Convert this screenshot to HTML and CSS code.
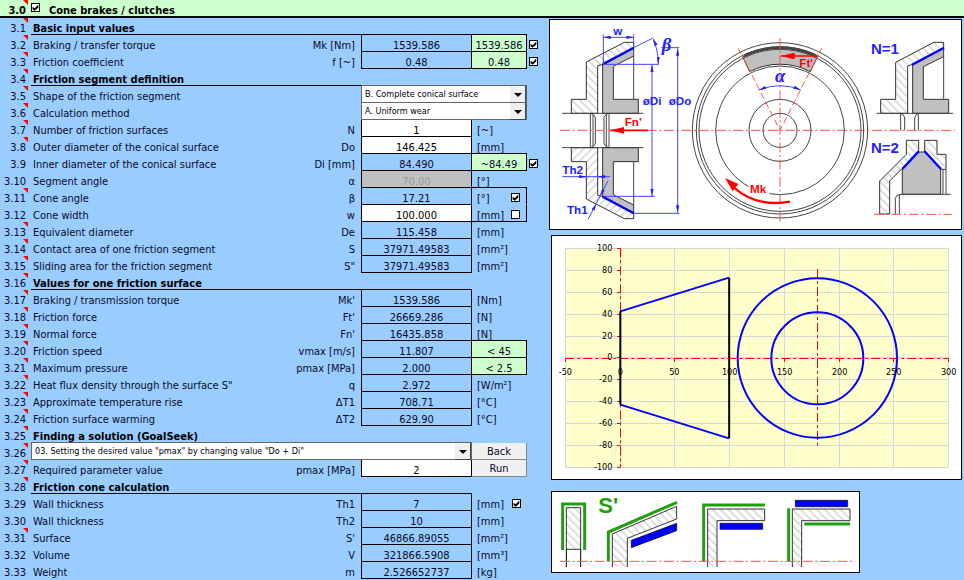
FILE: index.html
```html
<!DOCTYPE html>
<html lang="en">
<head>
<meta charset="utf-8">
<title>Cone brakes / clutches</title>
<link rel="stylesheet" href="styles.css">
</head>
<body>
<header class="title-bar">
  <span class="title-no note">3.0</span>
  <input type="checkbox" id="section-on" checked>
  <label for="section-on" class="title">Cone brakes / clutches</label>
</header>
<main class="sheet">
<form class="inputs">
<table class="calc">
<colgroup><col class="c-no"><col><col class="c-sym"><col class="c-val"><col class="c-ext"><col class="c-chk"></colgroup>
<tbody>
<tr class="section"><td class="no note">3.1</td><th colspan="3">Basic input values</th><td class="line"></td><td></td></tr>
<tr><td class="no note">3.2</td><td><label for="k1">Braking / transfer torque</label></td><td class="sym">Mk [Nm]</td><td class="val">1539.586</td><td class="hint">1539.586</td><td class="chk"><input type="checkbox" id="k1" checked></td></tr>
<tr><td class="no note">3.3</td><td><label for="k2">Friction coefficient</label></td><td class="sym">f [~]</td><td class="val">0.48</td><td class="hint">0.48</td><td class="chk"><input type="checkbox" id="k2" checked></td></tr>
<tr class="section"><td class="no note">3.4</td><th colspan="3">Friction segment definition</th><td></td><td></td></tr>
<tr><td class="no note">3.5</td><td><label for="shape">Shape of the friction segment</label></td><td></td><td class="pick" colspan="2"><div class="drop"><select id="shape"><option>B. Complete conical surface</option></select></div></td><td></td></tr>
<tr><td class="no note">3.6</td><td><label for="method">Calculation method</label></td><td></td><td class="pick" colspan="2"><div class="drop"><select id="method"><option>A. Uniform wear</option></select></div></td><td></td></tr>
<tr><td class="no note">3.7</td><td><label for="n">Number of friction surfaces</label></td><td class="sym">N</td><td class="val edit"><input type="text" id="n" value="1"></td><td class="unit">[~]</td><td></td></tr>
<tr><td class="no note">3.8</td><td><label for="do">Outer diameter of the conical surface</label></td><td class="sym">Do</td><td class="val edit"><input type="text" id="do" value="146.425"></td><td class="unit line">[mm]</td><td></td></tr>
<tr><td class="no">3.9</td><td><label for="k3">Inner diameter of the conical surface</label></td><td class="sym">Di [mm]</td><td class="val">84.490</td><td class="hint">~84.49</td><td class="chk"><input type="checkbox" id="k3" checked></td></tr>
<tr><td class="no">3.10</td><td>Segment angle</td><td class="sym">α</td><td class="val off">70.00</td><td class="unit line">[°]</td><td></td></tr>
<tr><td class="no note">3.11</td><td><label for="k4">Cone angle</label></td><td class="sym">β</td><td class="val">17.21</td><td class="unit side"><div class="pair">[°]<input type="checkbox" id="k4" checked></div></td><td></td></tr>
<tr><td class="no">3.12</td><td><label for="w">Cone width</label></td><td class="sym">w</td><td class="val edit"><input type="text" id="w" value="100.000"></td><td class="unit side line"><div class="pair">[mm]<input type="checkbox" aria-label="Cone width given"></div></td><td></td></tr>
<tr><td class="no note">3.13</td><td>Equivalent diameter</td><td class="sym">De</td><td class="val">115.458</td><td class="unit">[mm]</td><td></td></tr>
<tr><td class="no note">3.14</td><td>Contact area of one friction segment</td><td class="sym">S</td><td class="val">37971.49583</td><td class="unit">[mm²]</td><td></td></tr>
<tr><td class="no note">3.15</td><td>Sliding area for the friction segment</td><td class="sym">S"</td><td class="val">37971.49583</td><td class="unit">[mm²]</td><td></td></tr>
<tr class="section"><td class="no note">3.16</td><th colspan="3">Values for one friction surface</th><td></td><td></td></tr>
<tr><td class="no note">3.17</td><td>Braking / transmission torque</td><td class="sym">Mk'</td><td class="val">1539.586</td><td class="unit">[Nm]</td><td></td></tr>
<tr><td class="no note">3.18</td><td>Friction force</td><td class="sym">Ft'</td><td class="val">26669.286</td><td class="unit">[N]</td><td></td></tr>
<tr><td class="no note">3.19</td><td>Normal force</td><td class="sym">Fn'</td><td class="val">16435.858</td><td class="unit line">[N]</td><td></td></tr>
<tr><td class="no note">3.20</td><td>Friction speed</td><td class="sym">vmax [m/s]</td><td class="val">11.807</td><td class="hint">&lt; 45</td><td></td></tr>
<tr><td class="no note">3.21</td><td>Maximum pressure</td><td class="sym">pmax [MPa]</td><td class="val">2.000</td><td class="hint">&lt; 2.5</td><td></td></tr>
<tr><td class="no note">3.22</td><td>Heat flux density through the surface S"</td><td class="sym">q</td><td class="val">2.972</td><td class="unit">[W/m²]</td><td></td></tr>
<tr><td class="no note">3.23</td><td>Approximate temperature rise</td><td class="sym">ΔT1</td><td class="val">708.71</td><td class="unit">[°C]</td><td></td></tr>
<tr><td class="no note">3.24</td><td>Friction surface warming</td><td class="sym">ΔT2</td><td class="val">629.90</td><td class="unit">[°C]</td><td></td></tr>
<tr class="section"><td class="no note">3.25</td><th colspan="3">Finding a solution (GoalSeek)</th><td></td><td></td></tr>
<tr><td class="no note">3.26</td><td class="pick" colspan="3"><div class="drop"><select aria-label="Goal"><option>03. Setting the desired value "pmax" by changing value "Do + Di"</option></select></div></td><td class="pick"><button type="button">Back</button></td><td></td></tr>
<tr><td class="no note">3.27</td><td><label for="goal">Required parameter value</label></td><td class="sym">pmax [MPa]</td><td class="val edit"><input type="text" id="goal" value="2"></td><td class="pick"><button type="button">Run</button></td><td></td></tr>
<tr class="section"><td class="no note">3.28</td><th colspan="3">Friction cone calculation</th><td></td><td></td></tr>
<tr><td class="no">3.29</td><td><label for="k5">Wall thickness</label></td><td class="sym">Th1</td><td class="val">7</td><td class="unit"><div class="pair">[mm]<input type="checkbox" id="k5" checked></div></td><td></td></tr>
<tr><td class="no">3.30</td><td>Wall thickness</td><td class="sym">Th2</td><td class="val">10</td><td class="unit">[mm]</td><td></td></tr>
<tr><td class="no note">3.31</td><td>Surface</td><td class="sym">S'</td><td class="val">46866.89055</td><td class="unit">[mm²]</td><td></td></tr>
<tr><td class="no">3.32</td><td>Volume</td><td class="sym">V</td><td class="val">321866.5908</td><td class="unit">[mm³]</td><td></td></tr>
<tr><td class="no">3.33</td><td>Weight</td><td class="sym">m</td><td class="val">2.526652737</td><td class="unit">[kg]</td><td></td></tr>
</tbody>
</table>
</form>

<div class="figures">
<svg class="figure" viewBox="6 12 1233 627" role="img" aria-label="Cone clutch scheme">
  <defs>
    <pattern id="hatch" width="17" height="17" patternUnits="userSpaceOnUse" patternTransform="rotate(-45)"><rect width="17" height="17" fill="#fff"/><path d="M8 0V17" stroke="#b0b0b0" stroke-width="2.5"/></pattern>
    <marker id="blue" viewBox="0 0 22 10" refX="22" refY="5" markerWidth="22" markerHeight="10" markerUnits="userSpaceOnUse" orient="auto-start-reverse"><path d="M0 0L22 5L0 10Z" fill="#22f"/></marker>
    <marker id="red" viewBox="0 0 42 20" refX="42" refY="10" markerWidth="42" markerHeight="20" markerUnits="userSpaceOnUse" orient="auto"><path d="M0 0L42 10L0 20Z" fill="#f00"/></marker>
    <g id="half">
      <path class="hatch" d="M115 138L229 79H257V96L166 145L149 149V292H70V250H115Z"/>
      <path class="solid" d="M164 147L257 97V120L196 151V250H271V292H164Z"/>
      <path class="thick" d="M164 145L257 95"/>
      <path class="edge" d="M42 292H286M257 120V250M127 292V343M127 292Q138 294 142 304V343M135 296V343M183 292Q172 294 168 304V343M183 292V343M175 296V343"/>
    </g>
  </defs>
  <use href="#half"/>
  <use href="#half" transform="translate(0 687) scale(1 -1)"/>
  <path class="axis" d="M36 343H1221"/>
  <path class="dim" d="M166 55V145M257 55V97M257 95L313 67M340 95H394M166 145H333M166 541H320M257 592H394M43 482H186M115 476V488M149 476V488"/>
  <path class="dim both" d="M166 64H257"/>
  <path class="dim both" d="M312 147V540"/>
  <path class="dim both" d="M389 97V590"/>
  <path class="dim both" d="M315 68Q330 100 331 144"/>
  <path class="dim to" d="M90 482H115"/>
  <path class="dim to" d="M175 482H149"/>
  <path class="dim to" d="M120 610L145 563"/>
  <path class="dim to" d="M180 495L156 540"/>
  <path class="dim" d="M145 563L156 540"/>
  <path d="M300 343H186" stroke="#f00" stroke-width="5" marker-end="url(#red)"/>
  <g class="tag">
    <text x="196" y="58">w</text><text x="284" y="268">øDi</text><text x="362" y="268">øDo</text>
    <text x="43" y="473">Th2</text><text x="57" y="593">Th1</text>
    <text class="greek" x="341" y="105">β</text>
    <text class="red" x="230" y="330">Fn'</text>
  </g>
  <g transform="translate(411 0)">
    <path class="solid" d="M173 123A247 247 0 0 1 397 123L376 167A196 196 0 0 0 194 167Z"/>
    <path d="M178 119A247 247 0 0 1 392 119" fill="none" stroke="#444" stroke-width="7"/>
    <circle class="edge" cx="285" cy="343" r="263"/><circle class="edge" cx="285" cy="343" r="251"/><circle class="edge" cx="285" cy="343" r="243"/>
    <circle class="edge" cx="285" cy="343" r="193"/><circle class="edge" cx="285" cy="343" r="93"/><circle class="edge" cx="285" cy="343" r="51"/>
    <path d="M190 508L253 520V545H190Z" fill="#fff"/>
    <path class="axis" d="M285 67V617"/>
    <path class="ray" d="M160 97L285 343L410 97"/>
    <path class="dim both" d="M222 222Q285 196 347 222"/>
    <path d="M397 120H287" stroke="#f00" stroke-width="4" marker-end="url(#red)"/>
    <path d="M315 557Q215 575 146 514" fill="none" stroke="#f00" stroke-width="7"/><path d="M120 486L160 504L143 526Z" fill="#f00"/>
    <g class="tag"><text class="greek" x="270" y="197">α</text><text class="red" x="343" y="153">Ft'</text><text class="red" x="195" y="531">Mk</text></g>
  </g>
  <g transform="translate(921 0)">
    <path class="hatch" d="M122 139L236 79H266V96L173 145L158 150V292H77V250H122Z"/>
    <path class="solid" d="M173 147L266 97V122L205 152V250H281V292H173Z"/>
    <path class="thick" d="M171 146L267 95"/>
    <path class="edge" d="M65 292H294M266 122V250M137 292V343M137 292Q148 296 149 306V343M190 292V343M190 292Q180 296 179 306V343"/>
    <path class="hatch" d="M154 373H191V408L104 495V594H74V495L154 415Z"/>
    <path class="hatch" d="M209 373H246V415H273V460H257L209 408Z"/>
    <path class="solid" d="M191 408H209L257 460V535H142V458Z"/>
    <path class="thick" d="M191 406L142 459M208 405L258 459"/>
    <path class="edge" d="M264 460V535M273 460V535M135 535H287M135 535Q123 537 121 547V594M133 537V594"/>
    <path class="axis" d="M57 595H291"/>
    <g class="tag big"><text x="48" y="115">N=1</text><text x="48" y="412">N=2</text></g>
  </g>
</svg>

<svg class="figure inset" viewBox="12 12 1227 729" role="img" aria-label="Cone geometry chart">
  <rect x="52" y="49" width="1150" height="657" fill="#ffc"/>
  <path class="grid" d="M52.5 49V706M217.5 49V706M379.5 49V706M544.5 49V706M709.5 49V706M874.5 49V706M1036.5 49V706M1201.5 49V706M52 49.5H1202M52 115.5H1202M52 181.5H1202M52 247.5H1202M52 313.5H1202M52 376.5H1202M52 442.5H1202M52 508.5H1202M52 574.5H1202M52 640.5H1202M52 706.5H1202"/>
  <path class="cross" d="M52 379.5H1202M217.5 49V706M808.5 111V642"/>
  <path class="tick" d="M52.5 379V390M217.5 379V390M379.5 379V390M544.5 379V390M709.5 379V390M874.5 379V390M1036.5 379V390M1201.5 379V390M207 49.5H218M207 115.5H218M207 181.5H218M207 247.5H218M207 313.5H218M207 376.5H218M207 442.5H218M207 508.5H218M207 574.5H218M207 640.5H218M207 706.5H218"/>
  <path class="cone" d="M217 238L543 137M217 518L543 619"/>
  <circle class="cone" cx="808" cy="378" r="239"/><circle class="cone" cx="808" cy="379" r="138"/>
  <path class="wall" d="M217 238V518M543.5 137V619"/>
  <g class="num end"><text x="193" y="56">100</text><text x="193" y="122">80</text><text x="193" y="188">60</text><text x="193" y="254">40</text><text x="193" y="320">20</text><text x="193" y="384">0</text><text x="193" y="450">-20</text><text x="193" y="516">-40</text><text x="193" y="582">-60</text><text x="193" y="648">-80</text><text x="193" y="713">-100</text></g>
  <g class="num mid"><text x="52" y="428">-50</text><text x="217" y="428">0</text><text x="379" y="428">50</text><text x="545" y="428">100</text><text x="710" y="428">150</text><text x="875" y="428">200</text><text x="1037" y="428">250</text><text x="1202" y="428">300</text></g>
</svg>

<svg class="figure inset small" viewBox="12 21 921 240" role="img" aria-label="Cooled surface variants">
  <path class="hatch" d="M55 68H98V193H55Z"/>
  <path class="edge dark" d="M55 193V246M98 193V246"/>
  <path class="cool" d="M44 195V57H110V195"/>
  <path class="hatch" d="M193 246V147L386 64V102L238 160V246"/>
  <path class="cool" d="M181 229V141L387 52"/>
  <path class="pad" d="M250 166L386 115V137L250 188Z"/>
  <path class="hatch" d="M479 246V72H650V107H507V246"/>
  <path class="cool" d="M467 230V60H651"/>
  <path class="pad" d="M516 115H644V133H516Z"/>
  <path class="hatch" d="M733 246V72H906V107H761V246"/>
  <path class="cool" d="M722 70V229M769 117H906"/>
  <path class="pad" d="M742 46H899V65H742Z"/>
  <path class="axis" d="M36 229H914"/>
  <text class="cool-tag" x="151" y="83">S'</text>
</svg>
</div>
</main>
</body>
</html>
```
FILE: styles.css
```css
* { box-sizing: border-box; }

body {
  margin: 0;
  background: #9cf;
  color: #0a0a28;
  font: 11px/11px "DejaVu Sans Condensed", "DejaVu Sans", sans-serif;
}

.title-bar {
  display: flex;
  align-items: flex-start;
  height: 18px;
  background: #cfc;
  border-bottom: 2px solid #000;
  color: #000;
  font-weight: bold;
}
.title-no { width: 31px; padding: 5px 5px 0 0; text-align: right; }
.title { padding: 5px 0 0 9px; }
.title-bar input { margin-top: 3px; }

.note { position: relative; }
.note::after {
  content: "";
  position: absolute;
  top: 0;
  right: 3px;
  border-top: 5px solid #f00;
  border-left: 5px solid transparent;
}

.sheet {
  display: grid;
  grid-template-columns: minmax(0, 549fr) minmax(0, 415fr);
  align-items: start;
}

.calc { width: 100%; table-layout: fixed; border-collapse: separate; border-spacing: 0; }
.c-no { width: 31px; }
.c-sym { width: 90px; }
.c-val { width: 111px; }
.c-ext { width: 55px; }
.c-chk { width: 22px; }

td, th {
  height: 17px;
  padding: 5px 0 0 2px;
  border-bottom: 1px solid transparent;
  vertical-align: top;
  text-align: left;
  white-space: nowrap;
}
td.no { padding: 5px 5px 0 0; text-align: right; }
td.sym { padding: 5px 6px 0 0; text-align: right; }
td.unit { padding: 5px 0 0 5px; }
td.line, .section th { border-bottom-color: #000; }
.section th { color: #000; font-weight: bold; }
td.side { border-right: 1px solid #000; }
td.val { padding: 5px 0 0; border: solid #000; border-width: 0 1px 1px; text-align: center; }
td.hint {
  padding: 5px 0 0;
  background: #cfc;
  border: solid #000;
  border-width: 0 1px 1px 0;
  text-align: center;
}
td.off { background: #c0c0c0; color: #999; }
td.val.edit { padding: 0; background: #fff; }
td.pick { padding: 0; border: 0; }
td.chk { padding: 5px 0 0 2px; }

label { display: block; }
input, select, button { font: inherit; color: inherit; margin: 0; border-radius: 0; appearance: none; }
input[type="text"] {
  display: block;
  width: 100%;
  height: 16px;
  padding: 4px 0 0;
  border: 0;
  background: none;
  text-align: center;
  color: #000;
}
input[type="checkbox"] {
  display: block;
  flex: none;
  width: 9px;
  height: 9px;
  border: 1px solid #000;
  background: #fff;
}
input[type="checkbox"]:checked::before {
  content: "";
  display: block;
  width: 7px;
  height: 7px;
  background: #000;
  clip-path: polygon(8% 38%, 38% 62%, 90% 8%, 90% 50%, 38% 98%, 8% 75%);
}
.pair { display: flex; justify-content: space-between; height: 11px; padding-right: 6px; }

.drop { position: relative; height: 18px; margin-top: -1px; border: 1px solid #666; background: #fff; }
.drop select {
  display: block;
  width: 100%;
  height: 16px;
  padding: 0 16px 0 3px;
  border: 0;
  background: none;
  color: #000;
  font-size: 9px;
  line-height: 16px;
}
.drop::before {
  content: "";
  position: absolute;
  top: 0;
  right: 0;
  width: 15px;
  height: 16px;
  background: #f0f0f0;
  border: solid #444;
  border-width: 0 1px 1px 0;
  pointer-events: none;
}
.drop::after {
  content: "";
  position: absolute;
  top: 7px;
  right: 4px;
  border: solid transparent;
  border-width: 4px 4px 0;
  border-top-color: #000;
  pointer-events: none;
}
button {
  display: block;
  width: 100%;
  height: 17px;
  padding: 0;
  background: #f0f0f0;
  border: solid #888;
  border-width: 0 1px 1px 0;
}

.figures { padding: 1px 2px 0 0; }
.figure { display: block; width: 100%; height: auto; background: #fff; border: 1px solid #000; }
.inset { width: auto; margin: 5px 0 0 2px; }
.small { max-width: 309px; margin-top: 11px; }

.hatch { fill: url(#hatch); stroke: #333; stroke-width: 3; }
.solid { fill: #c0c0c0; stroke: #333; stroke-width: 3; }
.edge { fill: none; stroke: #444; stroke-width: 3; }
.dark { stroke: #000; }
.thick { fill: none; stroke: #00f; stroke-width: 7; }
.axis { fill: none; stroke: #ff5050; stroke-width: 3; stroke-dasharray: 30 8 6 8; }
.ray { fill: none; stroke: #ff5050; stroke-width: 3; stroke-dasharray: 20 10; }
.dim { fill: none; stroke: #44f; stroke-width: 3; }
.both { marker-start: url(#blue); marker-end: url(#blue); }
.to { marker-end: url(#blue); }
.tag { fill: #22f; font: bold 35px "Liberation Sans", sans-serif; }
.big { font-size: 45px; }
.red { fill: #f00; }
.greek { font: italic bold 56px "Liberation Serif", serif; }
.grid { stroke: #d8d8d8; stroke-width: 3; }
.cross { fill: none; stroke: #f00; stroke-width: 3; stroke-dasharray: 27 9 9 9; }
.tick { stroke: #f00; stroke-width: 3; }
.cone { fill: none; stroke: #00f; stroke-width: 6; }
.wall { stroke: #000; stroke-width: 6; }
.num { fill: #000; font-size: 27px; }
.end { text-anchor: end; }
.mid { text-anchor: middle; }
.cool { fill: none; stroke: #1fa00f; stroke-width: 9; }
.pad { fill: #00f; stroke: #000; stroke-width: 2; }
.cool-tag { fill: #1fa00f; font: bold 66px "Liberation Sans", sans-serif; }
```
